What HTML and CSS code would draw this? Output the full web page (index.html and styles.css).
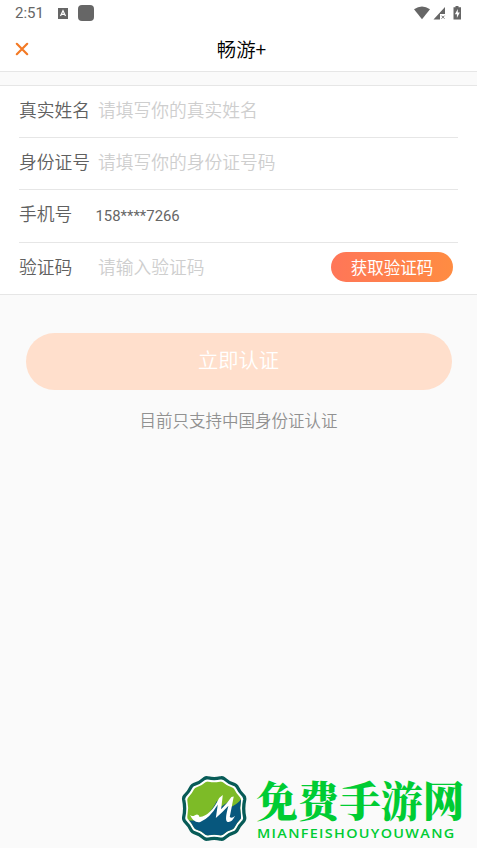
FILE: index.html
```html
<!DOCTYPE html>
<html lang="zh-CN">
<head>
<meta charset="utf-8">
<meta name="viewport" content="width=device-width, initial-scale=1">
<title>畅游+</title>
<link rel="stylesheet" href="styles.css">
</head>
<body>
<div class="status">
  <span class="time">2:51</span>
  <svg class="app" viewBox="0 0 10 11"><path fill="#666" d="M0 0h10v11H0z"/><path d="M2.5 8 5 2.7 7.5 8M3.4 6.4h3.2" fill="none" stroke="#fff" stroke-width="1.2"/></svg>
  <span class="block"></span>
  <svg class="signals" viewBox="0 0 50 16"><g fill="#666"><path d="M0 3.2Q8 -2.2 16 3.2L8 13.3z"/><path d="M31 1v7h-5v5.5h-6.5z"/><path d="M41.5 1.3V0h3v1.3H47v12.2h-7.5V1.3z"/></g><path d="m27.5 9.7 3 3m0-3-3 3" stroke="#777" fill="none"/><path d="M43.8 3v3.6h2L42.9 12V8.3h-2z" fill="#fff"/></svg>
</div>
<header class="header">
  <svg class="close" viewBox="0 0 14 14"><path d="m1.8 1.8 10.4 10.4m0-10.4L1.8 12.2" fill="none" stroke="#f37a25" stroke-width="2.2" stroke-linecap="round"/></svg>
  <h1 class="title">畅游+</h1>
</header>
<main class="form">
  <div class="row"><span class="label">真实姓名</span><span class="hint">请填写你的真实姓名</span></div>
  <div class="row"><span class="label">身份证号</span><span class="hint">请填写你的身份证号码</span></div>
  <div class="row"><span class="label">手机号</span><span class="phone">158****7266</span></div>
  <div class="row"><span class="label">验证码</span><span class="hint">请输入验证码</span><button class="code">获取验证码</button></div>
</main>
<button class="submit">立即认证</button>
<p class="note">目前只支持中国身份证认证</p>
<footer class="brand">
  <svg class="emblem" viewBox="34 34 202 196">
    <defs>
      <path id="badge" d="M-30-90Q-24-94-18-92Q0-88 18-92Q24-94 30-90Q44-77 60-73Q66-71 69-66Q76-51 89-38Q93-33 92-27Q86 0 92 27Q93 33 89 38Q76 51 69 66Q66 71 60 73Q44 77 30 90Q24 94 18 92Q0 88-18 92Q-24 94-30 90Q-44 77-60 73Q-66 71-69 66Q-76 51-89 38Q-93 33-92 27Q-86 0-92-27Q-93-33-89-38Q-76-51-69-66Q-66-71-60-73Q-44-77-30-90Z"/>
      <clipPath id="inner"><use href="#badge" transform="translate(134 132) scale(.88)"/></clipPath>
    </defs>
    <use href="#badge" transform="translate(134 132)" fill="#fff" stroke="#075b57" stroke-width="10"/>
    <g clip-path="url(#inner)">
      <path d="M34 34h202v196H34z" fill="#7dbb27"/>
      <path d="M34 168H65Q110 173 143 108L146 133L178 111L181 129Q205 120 220 98H236V230H34Z" fill="#07577d"/>
    </g>
    <path d="M61 151Q67 158 76 152Q88 147 90 158Q125 152 149 100L160 91L155 134Q173 117 186 97L193 96L181 158Q188 163 197 154Q187 176 173 172Q165 167 177 124Q158 145 139 161L145 120Q121 161 92 173Q72 177 61 151Z" fill="#fff"/>
  </svg>
  <div class="words"><div class="name">免费手游网</div><div class="latin">MIANFEISHOUYOUWANG</div></div>
</footer>
</body>
</html>
```
FILE: styles.css
```css
* { box-sizing: border-box; }
body {
  margin: 0;
  height: 848px;
  display: flex;
  flex-direction: column;
  background: #fafafa;
  font-family: "Noto Sans CJK SC", sans-serif;
  font-weight: 350;
  color: #606060;
  overflow: hidden;
}
button { border: 0; padding: 0; font-family: inherit; font-weight: inherit; color: #fff; }
.status {
  height: 26px;
  flex: none;
  display: flex;
  align-items: center;
  padding: 0 13px 0 15px;
  background: #fff;
}
.time { width: 43px; font: 15px/26px Roboto, sans-serif; color: #666; }
.app { width: 10px; height: 11px; }
.block { width: 16px; height: 16px; margin-left: 10px; border-radius: 4px; background: #666; }
.signals { width: 50px; height: 16px; margin: 1px 0 0 auto; }
.header {
  height: 46px;
  flex: none;
  display: grid;
  grid-template-columns: 40px 1fr 40px;
  align-items: center;
  border-bottom: 1px solid #e6e6e6;
  background: #fff;
}
.close { width: 14px; height: 14px; margin-left: 14.5px; }
.title { margin: 0 0 0 6px; text-align: center; font-size: 19.4px; line-height: 28px; font-weight: inherit; color: #000; }
.form {
  flex: none;
  margin-top: 13px;
  padding: 0 19px;
  border: solid #e6e6e6;
  border-width: 1px 0;
  background: #fff;
}
.row { height: 52.2px; display: flex; align-items: center; border-bottom: 1px solid #e6e6e6; font-size: 17.75px; padding-bottom: 5px; }
.row:last-child { height: 51.4px; border-bottom: 0; }
.label { width: 79px; }
.hint { color: #cecece; }
.phone { margin-left: -2.5px; font: 14.9px/20px Roboto, sans-serif; padding-top: 5px; color: #666; }
.code {
  width: 122px;
  height: 30px;
  margin: 3px 5px 0 auto;
  border-radius: 15px;
  background: linear-gradient(90deg, #ff7658, #ff8c42);
  font-size: 16.5px;
  font-weight: 400;
  line-height: 30px;
}
.submit {
  flex: none;
  height: 57px;
  margin: 38px 25.5px 0;
  border-radius: 29px;
  background: #ffdfcc;
  font-size: 20.3px;
  line-height: 51px;
  padding-bottom: 3px;
}
.note { margin: 18px 0 0; text-align: center; font-size: 16.5px; line-height: 25px; color: #919191; }
.brand { display: flex; margin: auto 0 6px 181px; height: 66px; }
.emblem { width: 67px; height: 65px; flex: none; }
.words { width: 210px; margin-left: 8px; color: #0c3; white-space: nowrap; }
.name { font: 900 41.7px/47px "Noto Serif CJK SC", "Noto Sans CJK SC", serif; }
.latin { width: 170px; margin: 5px 0 0 1px; font: 600 12px/12px "Open Sans", sans-serif; letter-spacing: 1.1px; transform: scaleX(1.2); transform-origin: left; }
```
